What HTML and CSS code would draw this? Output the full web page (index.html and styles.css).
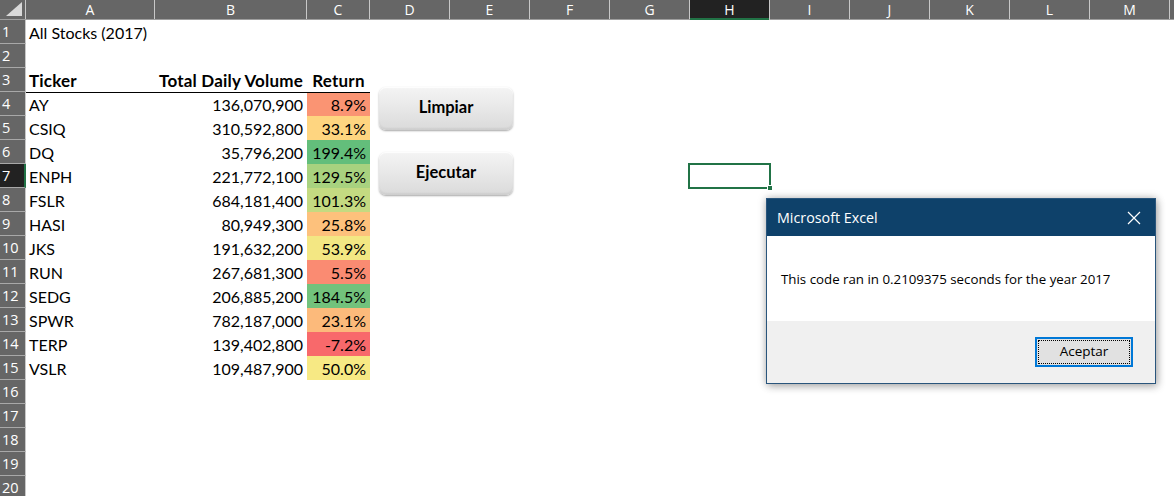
FILE: index.html
```html
<!DOCTYPE html>
<html>
<head>
<meta charset="utf-8">
<link rel="stylesheet" href="styles.css">
</head>
<body>
<div class="app">
  <div class="colheads">
    <div class="corner"><svg class="corner-tri" width="16" height="14" viewBox="0 0 16 14"><polygon points="16,0 16,14 0,14" fill="#d9d9d9"/></svg></div>
    <div class="ch w-a">A</div>
    <div class="ch w-b">B</div>
    <div class="ch w-c">C</div>
    <div class="ch w-d">D</div>
    <div class="ch w-d">E</div>
    <div class="ch w-d">F</div>
    <div class="ch w-d">G</div>
    <div class="ch w-d ch-sel">H</div>
    <div class="ch w-d">I</div>
    <div class="ch w-d">J</div>
    <div class="ch w-d">K</div>
    <div class="ch w-d">L</div>
    <div class="ch w-d">M</div>
    <div class="ch w-d"></div>
  </div>

  <div class="row"><div class="rh">1</div><div class="cell w-a ov">All Stocks (2017)</div></div>
  <div class="row"><div class="rh">2</div></div>
  <div class="row hdr"><div class="rh">3</div><div class="cell w-a b">Ticker</div><div class="cell w-b b r">Total Daily Volume</div><div class="cell w-c b ctr">Return</div></div>
  <div class="row"><div class="rh">4</div><div class="cell w-a">AY</div><div class="cell w-b r">136,070,900</div><div class="cell w-c r" style="background:#FA9473">8.9%</div></div>
  <div class="row"><div class="rh">5</div><div class="cell w-a">CSIQ</div><div class="cell w-b r">310,592,800</div><div class="cell w-c r" style="background:#FED580">33.1%</div></div>
  <div class="row"><div class="rh">6</div><div class="cell w-a">DQ</div><div class="cell w-b r">35,796,200</div><div class="cell w-c r" style="background:#63BE7B">199.4%</div></div>
  <div class="row"><div class="rh rh-sel">7</div><div class="cell w-a">ENPH</div><div class="cell w-b r">221,772,100</div><div class="cell w-c r" style="background:#A8D27F">129.5%</div></div>
  <div class="row"><div class="rh">8</div><div class="cell w-a">FSLR</div><div class="cell w-b r">684,181,400</div><div class="cell w-c r" style="background:#C4DA81">101.3%</div></div>
  <div class="row"><div class="rh">9</div><div class="cell w-a">HASI</div><div class="cell w-b r">80,949,300</div><div class="cell w-c r" style="background:#FDC17C">25.8%</div></div>
  <div class="row"><div class="rh">10</div><div class="cell w-a">JKS</div><div class="cell w-b r">191,632,200</div><div class="cell w-c r" style="background:#F3E783">53.9%</div></div>
  <div class="row"><div class="rh">11</div><div class="cell w-a">RUN</div><div class="cell w-b r">267,681,300</div><div class="cell w-c r" style="background:#FA8B72">5.5%</div></div>
  <div class="row"><div class="rh">12</div><div class="cell w-a">SEDG</div><div class="cell w-b r">206,885,200</div><div class="cell w-c r" style="background:#72C27C">184.5%</div></div>
  <div class="row"><div class="rh">13</div><div class="cell w-a">SPWR</div><div class="cell w-b r">782,187,000</div><div class="cell w-c r" style="background:#FCBA7B">23.1%</div></div>
  <div class="row"><div class="rh">14</div><div class="cell w-a">TERP</div><div class="cell w-b r">139,402,800</div><div class="cell w-c r" style="background:#F8696B">-7.2%</div></div>
  <div class="row"><div class="rh">15</div><div class="cell w-a">VSLR</div><div class="cell w-b r">109,487,900</div><div class="cell w-c r" style="background:#F7E984">50.0%</div></div>
  <div class="row"><div class="rh">16</div></div>
  <div class="row"><div class="rh">17</div></div>
  <div class="row"><div class="rh">18</div></div>
  <div class="row"><div class="rh">19</div></div>
  <div class="row"><div class="rh">20</div></div>

  <div class="shape btn-limpiar">Limpiar</div>
  <div class="shape btn-ejecutar">Ejecutar</div>

  <div class="selection"><span class="handle"></span></div>

  <div class="dialog">
    <div class="dlg-title">
      <span>Microsoft Excel</span>
      <svg class="dlg-close" width="14" height="14" viewBox="0 0 14 14"><path d="M1 1 L13 13 M13 1 L1 13" stroke="#ffffff" stroke-width="1.2" fill="none"/></svg>
    </div>
    <div class="dlg-body">This code ran in 0.2109375 seconds for the year 2017</div>
    <div class="dlg-foot"><div class="dlg-btn">Aceptar</div></div>
  </div>
</div>
</body>
</html>
```

FILE: styles.css
```css
* { box-sizing: border-box; }
html, body { margin: 0; padding: 0; background: #ffffff; }
body { width: 1174px; height: 496px; overflow: hidden; }

.app { position: relative; width: 1174px; height: 496px; overflow: hidden; }

.colheads {
  display: flex;
  height: 20px;
  background: #666666;
  border-bottom: 1px solid #9e9e9e;
  white-space: nowrap;
}
.corner {
  flex: 0 0 26px;
  border-right: 1px solid #c8c8c8;
  position: relative;
  display: flex;
  align-items: flex-end;
  justify-content: flex-end;
  padding: 0 3px 3px 0;
}
.ch {
  flex: 0 0 auto;
  border-right: 1px solid #c8c8c8;
  color: #ffffff;
  font-family: "Open Sans", "Noto Sans", sans-serif;
  font-size: 14px;
  line-height: 19px;
  text-align: center;
}
.ch-sel {
  background: #222222;
  box-shadow: inset 0 -2px 0 #217346;
  margin-bottom: -1px;
}
.w-a { width: 129px; flex: 0 0 129px; }
.w-b { width: 152px; flex: 0 0 152px; }
.w-c { width: 63px; flex: 0 0 63px; }
.w-d { width: 80px; flex: 0 0 80px; }

.row { display: flex; height: 24px; }
.rh {
  flex: 0 0 26px;
  background: #666666;
  border-right: 1px solid #c8c8c8;
  border-bottom: 1px solid #a8a8a8;
  color: #ffffff;
  font-family: "Open Sans", "Noto Sans", sans-serif;
  font-size: 14.5px;
  line-height: 23px;
  padding-left: 2px;
  text-align: left;
}
.rh-sel {
  background: #222222;
  border-right: 2px solid #217346;
}
.cell {
  font-family: Lato, "Liberation Sans", sans-serif;
  font-size: 16px;
  color: #000000;
  line-height: 24px;
  padding: 1px 4px 0 3px;
  white-space: nowrap;
}
.cell.ov { overflow: visible; }
.cell.b { font-weight: bold; font-size: 17px; letter-spacing: 0.2px; }
.cell.r { text-align: right; padding-right: 4px; }
.cell.ctr { text-align: center; padding-left: 0; padding-right: 0; }
.hdr .cell { border-bottom: 1px solid #000000; height: 25px; }
.hdr { position: relative; z-index: 1; }

.shape {
  position: absolute;
  width: 134px;
  height: 43px;
  border-radius: 7px;
  background: linear-gradient(to bottom, #f4f4f4 0%, #e9e9e9 45%, #dadada 100%);
  box-shadow: 0 1px 2px rgba(0,0,0,0.35), inset 0 -2px 2px rgba(0,0,0,0.06), inset 0 1px 1px rgba(255,255,255,0.9);
  font-family: Lato, "Liberation Sans", sans-serif;
  font-weight: bold;
  font-size: 16.5px;
  color: #000000;
  text-align: center;
  line-height: 40px;
}
.btn-limpiar { left: 379px; top: 87px; }
.btn-ejecutar { left: 379px; top: 152px; }

.selection {
  position: absolute;
  left: 688px;
  top: 163px;
  width: 83px;
  height: 26px;
  border: 2px solid #217346;
}
.handle {
  position: absolute;
  right: -4px;
  bottom: -4px;
  width: 6px;
  height: 6px;
  background: #217346;
  border: 1px solid #ffffff;
}

.dialog {
  position: absolute;
  left: 766px;
  top: 198px;
  width: 390px;
  height: 186px;
  border: 1px solid #29557c;
  background: #ffffff;
  box-shadow: 0 0 8px rgba(0,0,0,0.25), 2px 3px 8px rgba(0,0,0,0.2);
  display: flex;
  flex-direction: column;
  font-family: "Open Sans", "Noto Sans", sans-serif;
}
.dlg-title {
  flex: 0 0 37px;
  background: #0e416a;
  color: #ffffff;
  font-size: 14.3px;
  display: flex;
  align-items: center;
  justify-content: space-between;
  padding: 0 14px 0 10px;
}
.dlg-close { display: block; }
.dlg-body {
  flex: 0 0 85px;
  padding: 34px 0 0 14px;
  font-size: 13.3px;
  color: #000000;
  line-height: 18px;
}
.dlg-foot {
  flex: 1 1 auto;
  background: #f0f0f0;
  display: flex;
  justify-content: flex-end;
  align-items: flex-start;
  padding: 16px 22px 0 0;
}
.dlg-btn {
  width: 98px;
  height: 30px;
  border: 2px solid #0078d7;
  background: #e1e1e1;
  outline: 1px dotted #000000;
  outline-offset: -4px;
  font-size: 13.5px;
  color: #000000;
  text-align: center;
  line-height: 25px;
}
```
